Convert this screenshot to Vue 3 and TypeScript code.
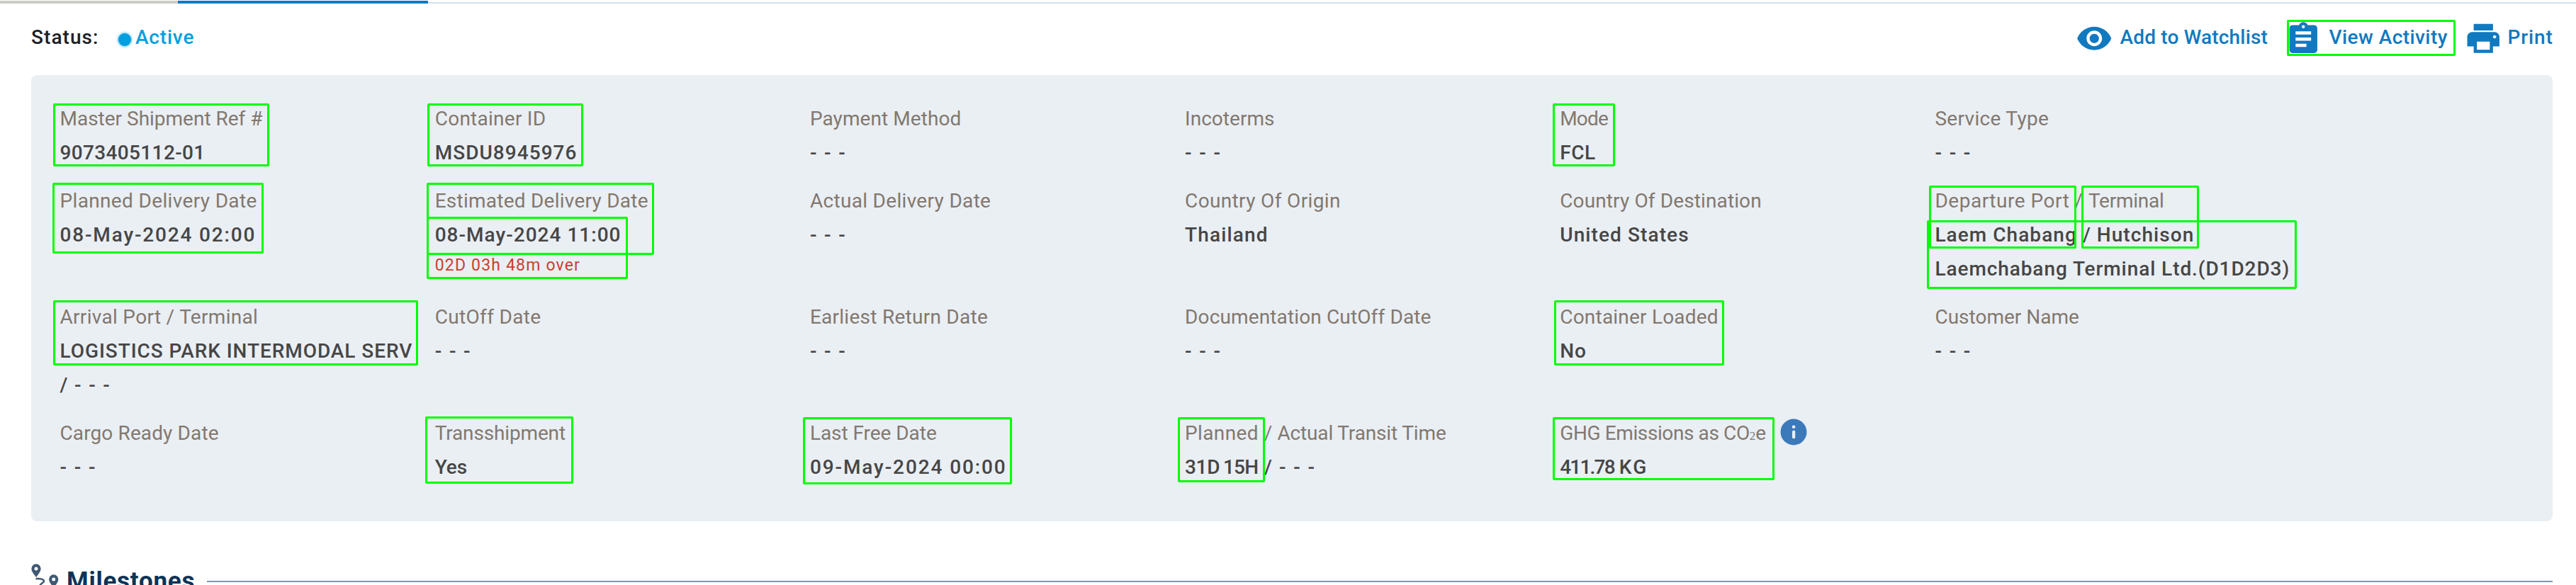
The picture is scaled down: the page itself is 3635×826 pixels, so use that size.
<script setup lang="ts">
import type { Directive } from 'vue'

interface Run {
  text: string
  width?: number
  gap?: number
  sub?: boolean
}
interface Field {
  label: Run[]
  values: Run[][]
  note?: Run
  info?: boolean
}
interface Mark {
  x: number
  y: number
  w: number
  h: number
}

const run = (text: string, width?: number, gap = 0): Run => ({ text, width, gap })
const one = (text: string, width: number): Run[] => [run(text, width)]
const none: Run[] = one('- - -', 48.5)

// Tracks a text out or in so that it fills the given advance width.
const fit = (el: HTMLElement, width?: number) => {
  if (!width) return
  const natural = el.getBoundingClientRect().width
  const count = (el.textContent ?? '').length
  el.style.letterSpacing = `${((width + 1.4 - natural) / (count - 1)).toFixed(3)}px`
}
const vFit: Directive<HTMLElement, number | undefined> = {
  mounted: (el, binding) => fit(el, binding.value),
}

const fields: Field[] = [
  { label: one('Master Shipment Ref #', 284.6), values: [one('9073405112-01', 203.3)] },
  { label: one('Container ID', 155), values: [one('MSDU8945976', 198.4)] },
  { label: one('Payment Method', 212), values: [none] },
  { label: one('Incoterms', 125), values: [none] },
  { label: one('Mode', 67.2), values: [one('FCL', 48.5)] },
  { label: one('Service Type', 159), values: [none] },

  { label: one('Planned Delivery Date', 276.4), values: [one('08-May-2024 02:00', 273.6)] },
  {
    label: one('Estimated Delivery Date', 299.4),
    values: [one('08-May-2024 11:00', 260.4)],
    note: run('02D 03h 48m over', 202.8),
  },
  { label: one('Actual Delivery Date', 253.7), values: [none] },
  { label: one('Country Of Origin', 218), values: [one('Thailand', 115)] },
  { label: one('Country Of Destination', 283), values: [one('United States', 180)] },
  {
    label: [run('Departure Port', 188), run('/', undefined, 7), run('Terminal', 105.5, 8)],
    values: [
      [run('Laem Chabang', 198), run('/', undefined, 8), run('Hutchison', 135, 9)],
      one('Laemchabang Terminal Ltd.(D1D2D3)', 498.4),
    ],
  },

  {
    label: one('Arrival Port / Terminal', 278),
    values: [one('LOGISTICS PARK INTERMODAL SERV', 495.4), [run('/'), run('- - -', 48.5, 9.5)]],
  },
  { label: one('CutOff Date', 148), values: [none] },
  { label: one('Earliest Return Date', 249.5), values: [none] },
  { label: one('Documentation CutOff Date', 346), values: [none] },
  { label: one('Container Loaded', 222), values: [one('No', 35.2)] },
  { label: one('Customer Name', 202), values: [none] },

  { label: one('Cargo Ready Date', 222.6), values: [none] },
  { label: one('Transshipment', 183), values: [one('Yes', 44)] },
  { label: one('Last Free Date', 177.5), values: [one('09-May-2024 00:00', 274.5)] },
  {
    label: [run('Planned', 102), run('/', undefined, 8), run('Actual Transit Time', 237, 7)],
    values: [[run('31D', 48), run('15H', 48.5, 5), run('/', undefined, 9), run('- - -', 48.5, 10)]],
  },
  {
    label: [run('GHG Emissions as CO', 266.5), { text: '2', sub: true }, run('e')],
    values: [[run('411.78', 77), run('KG', 37, 7)]],
    info: true,
  },
]

const marks: Mark[] = [
  { x: 75, y: 146, w: 305, h: 89 },
  { x: 603, y: 146, w: 220, h: 89 },
  { x: 2191, y: 146, w: 88, h: 89 },
  { x: 74, y: 258, w: 298, h: 100 },
  { x: 602, y: 258, w: 321, h: 102 },
  { x: 602, y: 306, w: 284, h: 88 },
  { x: 2722, y: 262, w: 208, h: 89 },
  { x: 2937, y: 262, w: 166, h: 89 },
  { x: 2719, y: 311, w: 522, h: 97 },
  { x: 75, y: 424, w: 515, h: 92 },
  { x: 2193, y: 424, w: 240, h: 92 },
  { x: 600, y: 588, w: 209, h: 95 },
  { x: 1133, y: 589, w: 295, h: 95 },
  { x: 1662, y: 589, w: 123, h: 92 },
  { x: 2191, y: 589, w: 313, h: 89 },
  { x: 3227, y: 28, w: 238, h: 51 },
]
</script>

<template>
  <div class="page">
    <div class="tabs">
      <div class="tab-prev"></div>
      <div class="tab-active"></div>
      <div class="tab-rest"></div>
    </div>

    <header class="toolbar">
      <div class="status">
        <div class="status-label"><span v-fit="93">Status:</span></div>
        <span class="dot"></span>
        <div class="status-value"><span v-fit="81">Active</span></div>
      </div>
      <nav class="actions">
        <a class="action watch">
          <svg viewBox="0 0 24 24">
            <path d="M12 4.5C7 4.5 2.73 7.61 1 12c1.73 4.39 6 7.5 11 7.5s9.27-3.11 11-7.5c-1.73-4.39-6-7.5-11-7.5zM12 17c-2.76 0-5-2.24-5-5s2.24-5 5-5 5 2.24 5 5-2.24 5-5 5zm0-8c-1.66 0-3 1.34-3 3s1.34 3 3 3 3-1.34 3-3-1.34-3-3-3z" />
          </svg>
          <span v-fit="207">Add to Watchlist</span>
        </a>
        <a class="action activity">
          <svg viewBox="0 0 24 24">
            <path d="M19 3h-4.18C14.4 1.84 13.3 1 12 1c-1.3 0-2.4.84-2.82 2H5c-1.1 0-2 .9-2 2v14c0 1.1.9 2 2 2h14c1.1 0 2-.9 2-2V5c0-1.1-.9-2-2-2zm-7 0c.55 0 1 .45 1 1s-.45 1-1 1-1-.45-1-1 .45-1 1-1zm2 14H7v-2h7v2zm3-4H7v-2h10v2zm0-4H7V7h10v2z" />
          </svg>
          <span v-fit="165.500">View Activity</span>
        </a>
        <a class="action print">
          <svg viewBox="0 0 24 24">
            <path d="M19 8H5c-1.660 0-3 1.340-3 3v6h4v4h12v-4h4v-6c0-1.660-1.340-3-3-3zm-3 11H8v-5h8v5zm3-7c-.55 0-1-.45-1-1s.45-1 1-1 1 .45 1 1-.45 1-1 1zm-1-9H6v4h12V3z" />
          </svg>
          <span v-fit="62">Print</span>
        </a>
      </nav>
    </header>

    <section class="panel">
      <div v-for="(field, f) in fields" :key="f" class="field">
        <div class="label">
          <span
            v-for="(r, i) in field.label"
            :key="i"
            v-fit="r.width"
            :class="{ sub: r.sub }"
            :style="{ marginLeft: (r.gap ?? 0) + 'px' }"
          >{{ r.text }}</span>
          <svg v-if="field.info" class="info" viewBox="0 0 38 38">
            <circle cx="19" cy="19" r="18.5" fill="#3b79bb" />
            <rect x="17" y="9.800" width="4.200" height="4" rx="0.800" fill="#eaeff4" />
            <rect x="17" y="16.800" width="4.200" height="11.500" rx="1.800" fill="#eaeff4" />
          </svg>
        </div>
        <div v-for="(value, v) in field.values" :key="v" class="value">
          <span
            v-for="(r, i) in value"
            :key="i"
            v-fit="r.width"
            :style="{ marginLeft: (r.gap ?? 0) + 'px' }"
          >{{ r.text }}</span>
        </div>
        <div v-if="field.note" class="note">
          <span v-fit="field.note.width">{{ field.note.text }}</span>
        </div>
      </div>
    </section>

    <div class="section-head">
      <svg class="route" viewBox="0 0 40 40">
        <path fill-rule="evenodd" d="M7 .3a6.600 6.600 0 0 1 6.600 6.600c0 4-3.600 7.600-6.600 12.300C4 14.500.4 10.900.4 6.900A6.600 6.600 0 0 1 7 .3zm0 4.100a2.500 2.500 0 1 0 0 5 2.500 2.500 0 0 0 0-5z" />
        <path fill-rule="evenodd" d="M31.700 15.300a6.600 6.600 0 0 1 6.600 6.600c0 4-3.600 7.600-6.600 12.300-3-4.700-6.600-8.300-6.600-12.300a6.600 6.600 0 0 1 6.600-6.600zm0 4.100a2.500 2.500 0 1 0 0 5 2.500 2.500 0 0 0 0-5z" />
        <path class="trail" d="M6.500 21.200c6-.6 11.500.6 11.500 3.200 0 2.800-6 3.600-6 7.600 0 4 8 5 19 5" />
      </svg>
      <h2><span v-fit="179">Milestones</span></h2>
      <div class="rule"></div>
    </div>

    <div
      v-for="(m, i) in marks"
      :key="i"
      class="mark"
      :style="{ left: m.x + 'px', top: m.y + 'px', width: m.w + 'px', height: m.h + 'px' }"
    ></div>
  </div>
</template>

<style>
html,
body {
  margin: 0;
  background: #ffffff;
  overflow: hidden;
}
</style>

<style scoped>
.page {
  position: relative;
  box-sizing: border-box;
  width: 3635px;
  height: 826px;
  overflow: hidden;
  background: #ffffff;
  font-family: Roboto, 'Liberation Sans', sans-serif;
  font-size: 28px;
  white-space: nowrap;
}
.tabs {
  display: flex;
  align-items: flex-end;
  height: 5px;
}
.tab-prev {
  width: 251px;
  height: 4px;
  background: #cccbc8;
}
.tab-active {
  width: 353px;
  height: 4px;
  background: #1179c0;
}
.tab-rest {
  flex: 1;
  height: 2px;
  background: #d5e0ea;
}
.toolbar {
  display: flex;
  justify-content: space-between;
  height: 101px;
  padding-left: 44px;
  line-height: 48px;
  font-weight: 500;
}
.status {
  display: flex;
  padding-top: 24px;
}
.status-label {
  width: 123px;
  color: #1b2026;
}
.dot {
  width: 18px;
  height: 18px;
  margin: 18px 6px 0 0;
  border-radius: 50%;
  background: #009fdf;
  box-shadow: 0 0 4px #009fdf;
}
.status-value {
  color: #009fdf;
}
.actions {
  display: flex;
  color: #1179c0;
}
.action {
  display: flex;
  padding-top: 24px;
}
.action svg {
  flex: none;
  width: 52.500px;
  height: 52.500px;
  fill: currentColor;
}
.watch {
  width: 295px;
}
.watch svg {
  margin: -1px 10px 0 0;
}
.activity {
  width: 253px;
}
.activity svg {
  margin: 0 10px 0 0;
}
.print {
  width: 158px;
}
.print svg {
  width: 54.500px;
  height: 54.500px;
  margin: -2px 7px 0 0;
}
.panel {
  display: grid;
  grid-template-columns: repeat(6, 529.200px);
  row-gap: 20px;
  align-content: start;
  box-sizing: border-box;
  width: 3558px;
  height: 630px;
  margin-left: 44px;
  padding: 38px 0 0 40.500px;
  border-radius: 8px;
  background: #eaeff4;
  line-height: 48px;
}
.label {
  display: flex;
  height: 48px;
  color: #82786f;
}
.value {
  display: flex;
  height: 48px;
  font-weight: 500;
  color: #464646;
}
.sub {
  padding-top: 4px;
  font-family: 'Liberation Serif', serif;
  font-size: 17px;
}
.note {
  height: 38px;
  margin-bottom: -38px;
  font-size: 23px;
  line-height: 38px;
  color: #c8412f;
}
.info {
  width: 38px;
  height: 38px;
  margin: 3px 0 0 20px;
}
.section-head {
  display: flex;
  height: 90px;
  padding: 60px 33px 0 44px;
}
.route {
  width: 40px;
  height: 40px;
  margin-right: 10px;
  fill: #3f5872;
}
.trail {
  fill: none;
  stroke: #3f5872;
  stroke-width: 2.500;
}
h2 {
  width: 198px;
  margin: 1px 0 0;
  font-size: 35px;
  line-height: 48px;
  font-weight: 700;
  color: #0e3356;
}
.rule {
  flex: 1;
  height: 2px;
  margin-top: 24px;
  background: #7b9ab5;
}
.mark {
  position: absolute;
  box-sizing: border-box;
  border: 3px solid #00ff00;
  border-radius: 2px;
}
</style>
